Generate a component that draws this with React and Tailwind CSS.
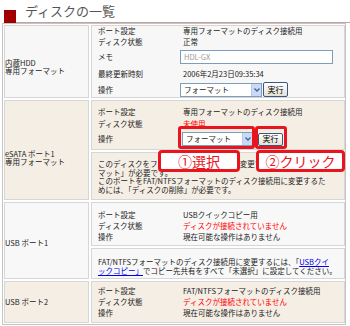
const font = "font-['Noto_Sans_CJK_JP',sans-serif]"

function Line({ label, className, children }) {
  return (
    <div className={`flex items-center ${className}`}>
      <span className="w-[85px] shrink-0">{label}</span>
      <div className="flex items-center">{children}</div>
    </div>
  )
}

function Select({ className }) {
  return (
    <div className={`flex items-center border border-[#7f9db9] bg-white ${className}`}>
      <span className="flex-1 pl-[3px] leading-none">フォーマット</span>
      <span className="flex h-full w-[10px] items-center justify-center border-l border-[#b9cbef] bg-[#c9d9f8]">
        <svg width="6" height="4" viewBox="0 0 6 4">
          <path d="M0.5 0.5 L3 3 L5.5 0.5" fill="none" stroke="#4d6185" strokeWidth="1.3" />
        </svg>
      </span>
    </div>
  )
}

function RunButton({ className }) {
  return (
    <div className={`flex items-center justify-center rounded-[2px] border border-[#3b5784] bg-gradient-to-b from-white to-[#e4e1d4] text-[8px] leading-none text-black ${className}`}>
      実行
    </div>
  )
}

export default function App() {
  return (
    <div className={`relative h-[326px] w-[350px] overflow-hidden bg-white text-[7.5px] text-[#222] ${font}`}>
      {/* Title */}
      <div className="flex h-[23px] items-end">
        <div className="ml-[4px] h-[13px] w-[12px] bg-[#a00000]" />
        <div className="flex-1 border-b border-[#c9a0a0] pb-[4px] pl-[9px] text-[13px] leading-[14px] text-[#555]">
          ディスクの一覧
        </div>
      </div>

      {/* Table */}
      <div className="mx-[2px] w-[344px] border border-[#c4c4c4] p-px">
        <div className="grid grid-cols-[85px_254px] gap-[2px]">
          {/* 内蔵HDD */}
          <div className="border border-[#d6d6d6] bg-[#f7f7f7] pt-[33px] leading-[8px]">
            内蔵HDD<br />専用フォーマット
          </div>
          <div className="flex flex-col border border-[#d6d6d6] bg-[#f7f7f7] pl-[6px]">
            <Line label="ポート設定" className="h-[9px]">専用フォーマットのディスク接続用</Line>
            <Line label="ディスク状態" className="h-[13px]">正常</Line>
            <Line label="メモ" className="h-[17px]">
              <div className="ml-[-3px] flex h-[14px] w-[153px] items-center border border-[#7f9db9] bg-white pl-[3px] text-[#9a9a9a]">
                HDL-GX
              </div>
            </Line>
            <Line label="最終更新時刻" className="h-[17px]">2006年2月23日09:35:34</Line>
            <Line label="操作" className="h-[15px]">
              <Select className="ml-[-3px] h-[14px] w-[82px]" />
              <RunButton className="ml-px h-[15px] w-[25px]" />
            </Line>
          </div>

          {/* eSATA */}
          <div className="border border-[#d6d6d6] bg-[#f5eee5] pt-[49px] leading-[8px]">
            eSATA ポート1<br />専用フォーマット
          </div>
          <div className="flex flex-col gap-[2px]">
            <div className="flex h-[50px] flex-col border border-[#d6d6d6] bg-[#f5eee5] pl-[6px] pt-[5px]">
              <Line label="ポート設定" className="h-[12px]">専用フォーマットのディスク接続用</Line>
              <Line label="ディスク状態" className="h-[11px]">
                <span className="text-[#ff0000]">未使用</span>
              </Line>
              <Line label="操作" className="h-[20px]">
                <Select className="ml-[-1px] h-[14px] w-[71px]" />
                <RunButton className="ml-[5px] h-[13px] w-[25px]" />
              </Line>
            </div>
            <div className="h-[48px] overflow-hidden whitespace-nowrap border border-[#d6d6d6] bg-[#f5eee5] pl-[6px] pt-[7px] leading-[8.7px]">
              このディスクをフォーマットして接続用に変更するには「フォー<br />
              マット」が必要です。<br />
              このポートをFAT/NTFSフォーマットのディスク接続用に変更するた<br />
              めには、「ディスクの削除」が必要です。
            </div>
          </div>

          {/* USB 1 */}
          <div className="border border-[#d6d6d6] bg-[#f8f8f8] pt-[36px] leading-[8px]">
            USB ポート1
          </div>
          <div className="flex flex-col gap-[2px]">
            <div className="flex h-[44px] flex-col border border-[#d6d6d6] bg-[#f8f8f8] pl-[6px] pt-[6px]">
              <Line label="ポート設定" className="h-[11px]">USBクイックコピー用</Line>
              <Line label="ディスク状態" className="h-[11px]">
                <span className="text-[#ff0000]">ディスクが接続されていません</span>
              </Line>
              <Line label="操作" className="h-[11px]">現在可能な操作はありません</Line>
            </div>
            <div className="h-[31px] overflow-hidden whitespace-nowrap border border-[#d6d6d6] bg-[#f8f8f8] pl-[6px] pt-[9px] leading-[8.5px]">
              FAT/NTFSフォーマットのディスク接続用に変更するには、「
              <span className="text-[#0000ee] underline">USBクイ</span>
              <br />
              <span className="text-[#0000ee] underline">ックコピー」</span>
              でコピー先共有をすべて「未選択」に設定してください。
            </div>
          </div>

          {/* USB 2 */}
          <div className="border border-[#d6d6d6] bg-[#f5eee5] pt-[16px] leading-[8px]">
            USB ポート2
          </div>
          <div className="flex h-[42px] flex-col border border-[#d6d6d6] bg-[#f5eee5] pl-[6px] pt-[3px]">
            <Line label="ポート設定" className="h-[11px]">FAT/NTFSフォーマットのディスク接続用</Line>
            <Line label="ディスク状態" className="h-[11px]">
              <span className="text-[#ff0000]">ディスクが接続されていません</span>
            </Line>
            <Line label="操作" className="h-[11px]">現在可能な操作はありません</Line>
          </div>
        </div>
      </div>

      {/* Annotations */}
      <div className="absolute left-[178px] top-[126px] h-[23px] w-[77px] rounded-[3px] border-[3px] border-[#e8141e]" />
      <div className="absolute left-[255px] top-[126px] h-[23px] w-[32px] rounded-[3px] border-[3px] border-[#e8141e]" />
      <div className="absolute left-[158px] top-[150px] flex h-[22px] w-[82px] items-center justify-center rounded-[4px] border-[3px] border-[#e8141e] bg-white text-[14px] leading-none text-[#e8141e]">
        ①選択
      </div>
      <div className="absolute left-[256px] top-[150px] flex h-[22px] w-[89px] items-center justify-center rounded-[4px] border-[3px] border-[#e8141e] bg-white text-[14px] leading-none text-[#e8141e]">
        ②クリック
      </div>
    </div>
  )
}
